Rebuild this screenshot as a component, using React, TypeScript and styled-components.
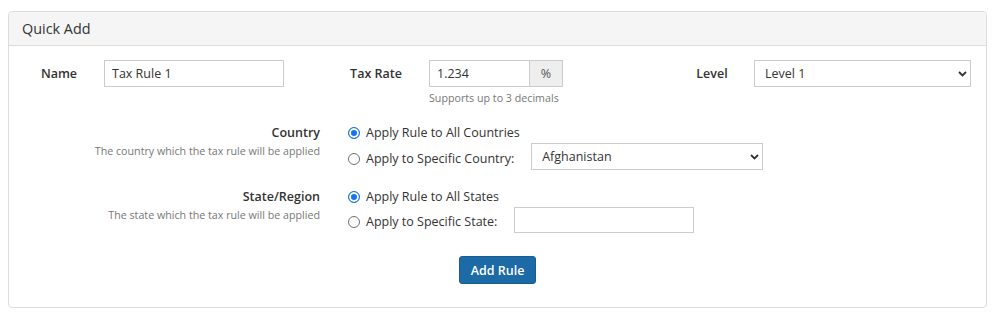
import React from "react";
import styled, { createGlobalStyle } from "styled-components";

const Global = createGlobalStyle`
  html, body { margin: 0; padding: 0; background: #fff; }
  body {
    font-family: "Open Sans", "Liberation Sans", Arial, sans-serif;
    font-size: 12.5px;
    color: #333;
  }
  * { box-sizing: border-box; }
`;

const Panel = styled.section`
  margin: 11px 11px 0 8px;
  border: 1px solid #dcdcdc;
  border-radius: 4px;
  background: #fff;
  overflow: hidden;
`;

const PanelHeader = styled.header`
  height: 34px;
  line-height: 33px;
  padding: 0 13px;
  background: #f5f5f5;
  border-bottom: 1px solid #dcdcdc;
  font-size: 14.4px;
  color: #333;
`;

const PanelBody = styled.div`
  padding: 14px 15px 23px 5px;
`;

const TopRow = styled.div`
  display: flex;
  align-items: flex-start;
`;

const FieldGroup = styled.div<{ $grow?: boolean; $shift?: number }>`
  display: grid;
  grid-template-columns: 90px ${(p) => (p.$grow ? "1fr" : "auto")};
  align-items: start;
  width: ${(p) => (p.$grow ? "auto" : "325px")};
  flex: ${(p) => (p.$grow ? "1" : "none")};
  & > label {
    padding-left: ${(p) => Math.max(0, p.$shift ?? 0)}px;
    padding-right: ${(p) => Math.max(0, -(p.$shift ?? 0))}px;
  }
`;

const FieldLabel = styled.label`
  text-align: center;
  font-weight: 600;
  line-height: 27px;
  font-size: 12.5px;
  color: #333;
  white-space: nowrap;
`;

const TextInput = styled.input<{ $width: number; $height?: number }>`
  width: ${(p) => p.$width}px;
  height: ${(p) => p.$height ?? 27}px;
  border: 1px solid #ccc;
  border-radius: 0;
  padding: 0 7px;
  font: inherit;
  font-size: 12.5px;
  color: #333;
  outline: none;
  background: #fff;
`;

const InputGroup = styled.div`
  display: flex;
`;

const Addon = styled.span`
  width: 33px;
  height: 27px;
  border: 1px solid #ccc;
  border-left: none;
  background: #eee;
  display: flex;
  align-items: center;
  justify-content: center;
  font-size: 12.5px;
  color: #555;
`;

const HelpText = styled.div<{ $align?: string }>`
  font-size: 10.7px;
  line-height: 16px;
  color: #777;
  margin-top: ${(p) => (p.$align ? "0" : "3px")};
  text-align: ${(p) => p.$align ?? "left"};
`;

const SelectWrap = styled.div<{ $width?: number }>`
  position: relative;
  width: ${(p) => (p.$width ? `${p.$width}px` : "100%")};
`;

const Select = styled.select<{ $height?: number }>`
  appearance: none;
  -webkit-appearance: none;
  width: 100%;
  height: ${(p) => p.$height ?? 27}px;
  border: 1px solid #ccc;
  border-radius: 0;
  background: #fff;
  padding: 0 24px 0 10px;
  font: inherit;
  font-size: 12.5px;
  color: #333;
  outline: none;
`;

const Chevron = styled.svg`
  position: absolute;
  right: 4px;
  top: 50%;
  margin-top: -3px;
  width: 9px;
  height: 6px;
  pointer-events: none;
`;

const Section = styled.div`
  display: grid;
  grid-template-columns: 306px 1fr;
  column-gap: 28px;
  margin-top: 17px;
`;

const SectionLabel = styled.div`
  text-align: right;
`;

const SectionTitle = styled.div`
  font-weight: 600;
  font-size: 12.5px;
  line-height: 20px;
  color: #333;
`;

const Options = styled.div`
  display: flex;
  flex-direction: column;
`;

const OptionRow = styled.div`
  display: flex;
  align-items: flex-end;
`;

const RadioLabel = styled.label<{ $pad?: boolean }>`
  display: flex;
  align-items: center;
  height: 20px;
  line-height: 20px;
  font-size: 12.5px;
  color: #333;
  margin-bottom: ${(p) => (p.$pad ? "1px" : "0")};
  margin-right: ${(p) => (p.$pad ? "17px" : "0")};
  white-space: nowrap;
`;

const Radio = styled.input.attrs({ type: "radio" })`
  appearance: none;
  -webkit-appearance: none;
  width: 12px;
  height: 12px;
  margin: 0 6px 0 0;
  border-radius: 50%;
  border: 1px solid #6f6f6f;
  background: #fff;
  flex: none;
  &:checked {
    border: 1px solid #1a73e8;
    background: #1a73e8;
    box-shadow: inset 0 0 0 2px #fff;
  }
`;

const Footer = styled.div`
  display: flex;
  justify-content: center;
  margin-top: 23px;
  padding-left: 10px;
`;

const PrimaryButton = styled.button`
  height: 28px;
  padding: 0 11px;
  background: #1c6ba6;
  border: 1px solid #185d91;
  border-radius: 3px;
  color: #fff;
  font: inherit;
  font-size: 12.5px;
  font-weight: 600;
  cursor: pointer;
`;

const ChevronIcon = () => (
  <Chevron viewBox="0 0 9 6">
    <path d="M1 1 L4.5 4.5 L8 1" fill="none" stroke="#333" strokeWidth="1.8" />
  </Chevron>
);

export default function App() {
  return (
    <>
      <Global />
      <Panel>
        <PanelHeader>Quick Add</PanelHeader>
        <PanelBody>
          <TopRow>
            <FieldGroup>
              <FieldLabel>Name</FieldLabel>
              <TextInput $width={180} defaultValue="Tax Rule 1" />
            </FieldGroup>
            <FieldGroup $shift={-16}>
              <FieldLabel>Tax Rate</FieldLabel>
              <div>
                <InputGroup>
                  <TextInput $width={101} defaultValue="1.234" />
                  <Addon>%</Addon>
                </InputGroup>
                <HelpText>Supports up to 3 decimals</HelpText>
              </div>
            </FieldGroup>
            <FieldGroup $grow $shift={6}>
              <FieldLabel>Level</FieldLabel>
              <SelectWrap>
                <Select defaultValue="Level 1">
                  <option>Level 1</option>
                  <option>Level 2</option>
                </Select>
                <ChevronIcon />
              </SelectWrap>
            </FieldGroup>
          </TopRow>

          <Section>
            <SectionLabel>
              <SectionTitle>Country</SectionTitle>
              <HelpText $align="right">The country which the tax rule will be applied</HelpText>
            </SectionLabel>
            <Options>
              <RadioLabel>
                <Radio name="country" defaultChecked />
                Apply Rule to All Countries
              </RadioLabel>
              <OptionRow>
                <RadioLabel $pad>
                  <Radio name="country" />
                  Apply to Specific Country:
                </RadioLabel>
                <SelectWrap $width={232}>
                  <Select defaultValue="Afghanistan">
                    <option>Afghanistan</option>
                    <option>Albania</option>
                  </Select>
                  <ChevronIcon />
                </SelectWrap>
              </OptionRow>
            </Options>
          </Section>

          <Section>
            <SectionLabel>
              <SectionTitle>State/Region</SectionTitle>
              <HelpText $align="right">The state which the tax rule will be applied</HelpText>
            </SectionLabel>
            <Options>
              <RadioLabel>
                <Radio name="state" defaultChecked />
                Apply Rule to All States
              </RadioLabel>
              <OptionRow>
                <RadioLabel $pad>
                  <Radio name="state" />
                  Apply to Specific State:
                </RadioLabel>
                <TextInput $width={180} $height={26} />
              </OptionRow>
            </Options>
          </Section>

          <Footer>
            <PrimaryButton>Add Rule</PrimaryButton>
          </Footer>
        </PanelBody>
      </Panel>
    </>
  );
}
